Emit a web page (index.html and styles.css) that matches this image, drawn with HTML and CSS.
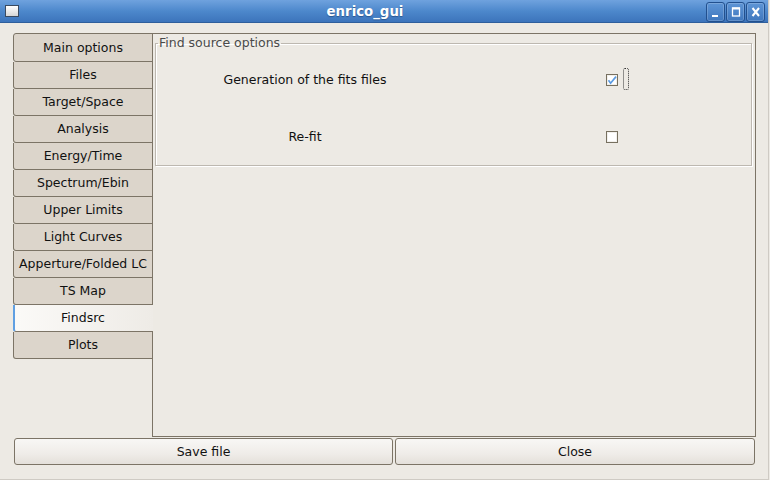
FILE: index.html
```html
<!DOCTYPE html>
<html>
<head>
<meta charset="utf-8">
<link rel="stylesheet" href="styles.css">
</head>
<body>
<div class="window">
  <div class="titlebar">
    <div class="app-icon"></div>
    <div class="title">enrico_gui</div>
    <div class="wm-buttons">
      <div class="wm-btn"><svg width="16" height="17" viewBox="0 0 16 17"><rect x="4" y="12" width="6" height="2" fill="#fff"/></svg></div>
      <div class="wm-btn"><svg width="16" height="17" viewBox="0 0 16 17"><rect x="4.5" y="5" width="7" height="8" fill="none" stroke="#fff" stroke-width="1.3"/><rect x="4" y="4.5" width="8" height="2" fill="#fff"/></svg></div>
      <div class="wm-btn"><svg width="16" height="17" viewBox="0 0 16 17"><path d="M4.5 5 L11 13 M11 5 L4.5 13" stroke="#fff" stroke-width="2" fill="none"/></svg></div>
    </div>
  </div>
  <div class="main">
    <div class="notebook">
      <div class="tabs">
        <div class="tab first">Main options</div>
        <div class="tab">Files</div>
        <div class="tab">Target/Space</div>
        <div class="tab">Analysis</div>
        <div class="tab">Energy/Time</div>
        <div class="tab">Spectrum/Ebin</div>
        <div class="tab">Upper Limits</div>
        <div class="tab">Light Curves</div>
        <div class="tab">Apperture/Folded LC</div>
        <div class="tab">TS Map</div>
        <div class="tab active">Findsrc</div>
        <div class="tab">Plots</div>
      </div>
      <div class="pane">
        <fieldset class="frame">
          <legend>Find source options</legend>
          <div class="grid">
            <div class="label">Generation of the fits files</div>
            <div class="check-cell">
              <span class="checkbox"><svg width="10" height="10" viewBox="0 0 10 10"><path d="M1.5 5.2 L3.6 8.2 L9 1.6" stroke="#5b9be2" stroke-width="1.7" fill="none"/></svg></span>
              <span class="focus"></span>
            </div>
            <div class="label">Re-fit</div>
            <div class="check-cell">
              <span class="checkbox"></span>
            </div>
          </div>
        </fieldset>
      </div>
    </div>
    <div class="buttons">
      <div class="btn save">Save file</div>
      <div class="btn close">Close</div>
    </div>
  </div>
</div>
</body>
</html>
```
FILE: styles.css
```css
html, body {
  margin: 0;
  padding: 0;
}
body {
  width: 770px;
  height: 480px;
  overflow: hidden;
  background: #edeae4;
  font-family: "DejaVu Sans", "Liberation Sans", sans-serif;
  font-size: 12.5px;
  color: #111;
}
.window {
  width: 769px;
  height: 480px;
  box-sizing: border-box;
  border-right: 1px solid #cfcbc4;
  border-bottom: 1px solid #cfcbc4;
  display: flex;
  flex-direction: column;
  background: #edeae4;
}
.titlebar {
  height: 22px;
  border-bottom: 1px solid #2f5f9c;
  background: linear-gradient(#6fa2de, #4d88cc 50%, #3c74bb);
  display: flex;
  align-items: center;
}
.app-icon {
  width: 12px;
  height: 10px;
  margin-left: 5px;
  margin-right: 5px;
  border: 1px solid #3a4a60;
  background: linear-gradient(#ffffff, #d6d6d6);
}
.title {
  flex: 1;
  text-align: center;
  color: #fff;
  font-weight: bold;
  font-size: 13.3px;
  text-shadow: 0 1px 1px #2a5690;
  padding-top: 1px;
}
.wm-buttons {
  display: flex;
  gap: 1px;
  margin-right: 3px;
  margin-top: 1px;
}
.wm-btn {
  width: 17px;
  height: 18px;
  border: 1px solid #22508e;
  border-radius: 3px;
  background: linear-gradient(#5e95d6, #3f77bd);
  box-shadow: inset 0 0 0 1px rgba(255,255,255,0.18);
  display: flex;
  align-items: center;
  justify-content: center;
}
.main {
  flex: 1;
  padding: 10px 12px 0 13px;
  display: flex;
  flex-direction: column;
}
.notebook {
  display: flex;
  height: 404px;
}
.tabs {
  width: 140px;
  flex: 0 0 140px;
  display: flex;
  flex-direction: column;
}
.tab {
  height: 27px;
  box-sizing: border-box;
  border: 1px solid #7c7466;
  border-top: none;
  border-radius: 0 0 0 3px;
  background: #dcd5cb;
  display: flex;
  align-items: center;
  justify-content: center;
  padding-bottom: 1px;
}
.tab.first {
  height: 29px;
  border-top: 1px solid #7c7466;
  border-radius: 3px 0 0 3px;
  padding-bottom: 0;
}
.tab.active {
  position: relative;
  z-index: 1;
  border-right-color: transparent;
  border-left: 2px solid #5f9fe2;
  background: linear-gradient(to right, #fbfaf8, #eeebe6);
  background-origin: border-box;
  padding-right: 1px;
}
.pane {
  flex: 1;
  margin-left: -1px;
  border: 1px solid #7c7466;
  padding: 2px 2px 2px 2px;
}
.frame {
  margin: 0;
  padding: 1px 0 0 0;
  border: 1px solid #bdb8b0;
  box-shadow: inset 1px 1px 0 #fff, 1px 1px 0 #fff;
  width: 597px;
  box-sizing: border-box;
}
.frame legend {
  padding: 0 1px;
  margin-left: 2px;
  color: #4a4a4a;
  font-size: 12.5px;
  line-height: 14px;
}
.grid {
  display: grid;
  grid-template-columns: 298px 1fr;
  grid-auto-rows: 57px;
}
.label {
  display: flex;
  align-items: center;
  justify-content: center;
}
.check-cell {
  display: flex;
  align-items: center;
  padding-left: 152px;
}
.checkbox {
  width: 12px;
  height: 12px;
  box-sizing: border-box;
  border: 1px solid #77705f;
  background: #fff;
  box-shadow: inset 0 0 0 1px #f2f0ec;
  display: flex;
  align-items: center;
  justify-content: center;
  margin-top: 1px;
}
.focus {
  width: 6px;
  height: 22px;
  box-sizing: border-box;
  border: 1px dotted #333;
  border-radius: 2px;
  margin-left: 5px;
  margin-top: -1px;
}
.buttons {
  display: flex;
  gap: 2px;
  margin-top: 1px;
  padding-left: 1px;
  width: 741px;
}
.btn {
  height: 27px;
  box-sizing: border-box;
  border: 1px solid #7c7466;
  border-radius: 3px;
  background: linear-gradient(#f8f7f5, #efece8 60%, #e4e0da);
  display: flex;
  align-items: center;
  justify-content: center;
}
.btn.save {
  flex: 0 0 379px;
}
.btn.close {
  flex: 1;
}
```
